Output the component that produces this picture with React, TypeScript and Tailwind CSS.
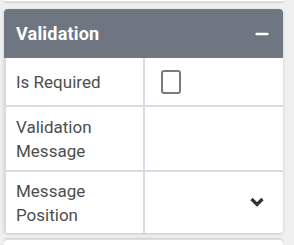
import { Minus } from "lucide-react";

function Row({ label, children, h }: { label: React.ReactNode; children?: React.ReactNode; h: string }) {
  return (
    <div className={`flex ${h} border-b-2 border-[#d7dbe2] last:border-b-0`}>
      <div className="w-[139px] shrink-0 border-r-2 border-[#d7dbe2] pl-[10px] flex items-center text-[17px] leading-[24px] text-[#4d4d4d]">
        {label}
      </div>
      <div className="flex-1 flex items-center px-[16px]">{children}</div>
    </div>
  );
}

export default function App() {
  return (
    <div
      className="w-[294px] h-[245px] overflow-hidden bg-[#efeff0] flex flex-col"
      style={{ fontFamily: "Roboto, 'Liberation Sans', sans-serif" }}
    >
      <div className="shrink-0 mx-[4px] w-[279px] h-[2px] bg-white border-b border-[#d9dce1] shadow-[0_1px_2px_rgba(0,0,0,0.12)]" />

      <div className="shrink-0 mt-[7px] ml-[4px] w-[279px] rounded-[4px] bg-white shadow-[0_1px_3px_rgba(0,0,0,0.18)] overflow-hidden">
        <div className="h-[49px] bg-[#6f7581] flex items-center justify-between pl-[12px] pr-[12px]">
          <span className="text-white font-bold text-[18px] tracking-[0.2px]">Validation</span>
          <Minus className="w-[18px] h-[18px] text-white" strokeWidth={3.5} />
        </div>
        <div className="border-l-2 border-[#d7dbe2]">
          <Row label="Is Required" h="h-[49px]">
            <div className="w-[20px] h-[24px] rounded-[3px] border-2 border-[#7a7a7a] bg-white" />
          </Row>
          <Row
            h="h-[65px]"
            label={
              <span>
                Validation
                <br />
                Message
              </span>
            }
          />
          <Row
            h="h-[61px]"
            label={
              <span>
                Message
                <br />
                Position
              </span>
            }
          >
            <div className="flex-1" />
            <svg width="14" height="11" viewBox="0 0 14 11" className="mr-[3px]">
              <path d="M1.5 2 L7 7.5 L12.5 2" fill="none" stroke="#333" strokeWidth="3.2" />
            </svg>
          </Row>
        </div>
      </div>

      <div className="shrink-0 mt-[6px] ml-[4px] w-[279px] h-[20px] rounded-t-[4px] bg-white shadow-[0_-1px_2px_rgba(0,0,0,0.12)] border-t border-[#d9dce1]" />
    </div>
  );
}
